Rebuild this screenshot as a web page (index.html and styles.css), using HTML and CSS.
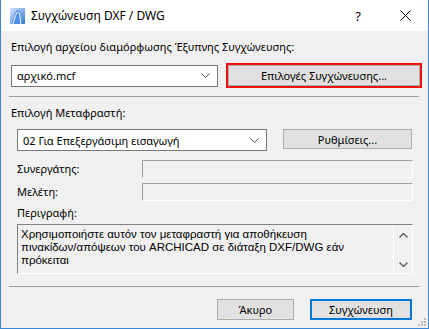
FILE: index.html
```html
<!DOCTYPE html>
<html lang="el">
<head>
    <meta charset="UTF-8">
    <title>Συγχώνευση DXF / DWG</title>
    <link rel="stylesheet" href="styles.css">
</head>
<body>
    <div class="window">
        <div class="titlebar">
            <svg class="app-icon" width="15" height="16" viewBox="0 0 15 16">
                <defs>
                    <linearGradient id="ig" x1="0" y1="0" x2="1" y2="1">
                        <stop offset="0" stop-color="#d9e8fb"/>
                        <stop offset="1" stop-color="#2f74de"/>
                    </linearGradient>
                </defs>
                <rect x="0" y="0" width="15" height="16" fill="url(#ig)"/>
                <path d="M2 16 C4 8 6 2 8 2 C10 2 11 8 12 16 Z" fill="#4a8ef0"/>
                <path d="M3 16 C5 9 6.5 4 8 4 C9.5 4 10.3 9 10.8 16" fill="none" stroke="#ffffff" stroke-width="1"/>
            </svg>
            <span class="title">Συγχώνευση DXF / DWG</span>
            <span class="help">?</span>
            <svg class="close" width="11" height="11" viewBox="0 0 11 11">
                <path d="M0.5 0.5 L10.5 10.5 M10.5 0.5 L0.5 10.5" stroke="#000" stroke-width="1"/>
            </svg>
        </div>
        <div class="content">
            <div class="label top-label">Επιλογή αρχείου διαμόρφωσης Έξυπνης Συγχώνευσης:</div>
            <div class="row first-row">
                <div class="combo combo-file">
                    <span>αρχικό.mcf</span>
                    <svg class="chevron" width="9" height="5" viewBox="0 0 9 5"><path d="M0.5 0.5 L4.5 4.5 L8.5 0.5" fill="none" stroke="#555" stroke-width="1"/></svg>
                </div>
                <div class="btn btn-focus-red">Επιλογές Συγχώνευσης...</div>
            </div>
            <div class="separator sep-one"></div>

            <div class="label">Επιλογή Μεταφραστή:</div>
            <div class="indent">
                <div class="row second-row">
                    <div class="combo combo-translator">
                        <span>02 Για Επεξεργάσιμη εισαγωγή</span>
                        <svg class="chevron" width="9" height="5" viewBox="0 0 9 5"><path d="M0.5 0.5 L4.5 4.5 L8.5 0.5" fill="none" stroke="#555" stroke-width="1"/></svg>
                    </div>
                    <div class="btn btn-settings">Ρυθμίσεις...</div>
                </div>
                <div class="field-row partner-row">
                    <span class="label">Συνεργάτης:</span>
                    <div class="field"></div>
                </div>
                <div class="field-row project-row">
                    <span class="label">Μελέτη:</span>
                    <div class="field"></div>
                </div>
                <div class="label desc-label">Περιγραφή:</div>
                <div class="description">
                    <div class="desc-text">Χρησιμοποιήστε αυτόν τον μεταφραστή για αποθήκευση<br>πινακίδων/απόψεων του ARCHICAD σε διάταξη DXF/DWG εάν<br>πρόκειται</div>
                    <div class="scrollbar">
                        <svg width="9" height="5" viewBox="0 0 9 5"><path d="M0.5 4.5 L4.5 0.5 L8.5 4.5" fill="none" stroke="#606060" stroke-width="1.4"/></svg>
                        <svg width="9" height="5" viewBox="0 0 9 5"><path d="M0.5 0.5 L4.5 4.5 L8.5 0.5" fill="none" stroke="#606060" stroke-width="1.4"/></svg>
                    </div>
                </div>
            </div>
            <div class="separator sep-two"></div>
            <div class="footer">
                <div class="btn btn-cancel">Άκυρο</div>
                <div class="btn btn-default">Συγχώνευση</div>
            </div>
            <svg class="grip" width="8" height="8" viewBox="0 0 8 8">
                <rect x="6" y="0" width="2" height="2" fill="#b8b8b8"/>
                <rect x="3" y="3" width="2" height="2" fill="#b8b8b8"/>
                <rect x="6" y="3" width="2" height="2" fill="#b8b8b8"/>
                <rect x="0" y="6" width="2" height="2" fill="#b8b8b8"/>
                <rect x="3" y="6" width="2" height="2" fill="#b8b8b8"/>
                <rect x="6" y="6" width="2" height="2" fill="#b8b8b8"/>
            </svg>
        </div>
    </div>
</body>
</html>
```

FILE: styles.css
```css
body {
    margin: 0;
    background: #ffffff;
    font-family: "Noto Sans", "DejaVu Sans", sans-serif;
    font-size: 11px;
    color: #000000;
}
.window {
    width: 429px;
    height: 329px;
    box-sizing: border-box;
    border: 1px solid #3b86d6;
    border-top: none;
    background: #f0f0f0;
    display: flex;
    flex-direction: column;
}
.titlebar {
    height: 31px;
    background: #ffffff;
    display: flex;
    align-items: center;
    flex-shrink: 0;
}
.app-icon {
    margin-left: 9px;
    margin-top: 1px;
}
.title {
    margin-left: 6px;
    font-size: 12px;
    flex: 1;
}
.help {
    font-size: 13px;
    margin-right: 39px;
}
.close {
    margin-right: 17px;
}
.content {
    flex: 1;
    padding: 0 6px 0 10px;
    position: relative;
}
.label {
    line-height: 16px;
    white-space: nowrap;
}
.top-label {
    margin-top: 8px;
}
.row {
    display: flex;
    align-items: flex-start;
}
.first-row {
    margin-top: 8px;
    align-items: center;
    height: 25px;
}
.combo {
    box-sizing: border-box;
    height: 22px;
    background: #ffffff;
    border: 1px solid #7a7a7a;
    display: flex;
    align-items: center;
    justify-content: space-between;
    padding: 0 7px 0 5px;
}
.combo-file {
    width: 207px;
}
.combo-translator {
    width: 250px;
}
.btn {
    box-sizing: border-box;
    background: #e1e1e1;
    border: 1px solid #adadad;
    display: flex;
    align-items: center;
    justify-content: center;
}
.btn-focus-red {
    width: 196px;
    height: 25px;
    margin-left: 8px;
    border: 2px solid #ee1111;
    box-shadow: inset 0 0 0 1px #adadad;
}
.separator {
    height: 1px;
    background: #a0a0a0;
    width: 410px;
    margin-left: -2px;
}
.sep-one {
    margin-top: 8px;
}
.sep-one + .label {
    margin-top: 8px;
}
.indent {
    padding-left: 6px;
}
.second-row {
    margin-top: 8px;
}
.btn-settings {
    width: 129px;
    height: 20px;
    margin-left: 16px;
}
.field-row {
    width: 396px;
    display: flex;
    align-items: center;
    justify-content: space-between;
}
.partner-row {
    margin-top: 9px;
}
.project-row {
    margin-top: 5px;
}
.field {
    box-sizing: border-box;
    width: 271px;
    height: 18px;
    border: 1px solid;
    border-color: #a0a0a0 #ffffff #ffffff #a0a0a0;
}
.desc-label {
    margin-top: 4px;
}
.description {
    box-sizing: border-box;
    margin-top: 3px;
    width: 396px;
    height: 50px;
    border: 1px solid;
    border-color: #828282 #ffffff #ffffff #828282;
    display: flex;
}
.desc-text {
    flex: 1;
    padding: 3px 4px 0 3px;
    font-family: "Liberation Sans", Arial, sans-serif;
    font-size: 11.5px;
    line-height: 13px;
    white-space: nowrap;
    overflow: hidden;
}
.scrollbar {
    width: 18px;
    border-left: 1px solid #ffffff;
    display: flex;
    flex-direction: column;
    justify-content: space-between;
    align-items: center;
    padding: 8px 0 6px;
}
.sep-two {
    margin-top: 12px;
}
.footer {
    display: flex;
    justify-content: flex-end;
    gap: 16px;
    margin-top: 12px;
    padding-right: 10px;
}
.btn-cancel {
    width: 77px;
    height: 21px;
}
.btn-default {
    width: 102px;
    height: 21px;
    border: 2px solid #0078d7;
}
.grip {
    position: absolute;
    right: 2px;
    bottom: 2px;
}
```
